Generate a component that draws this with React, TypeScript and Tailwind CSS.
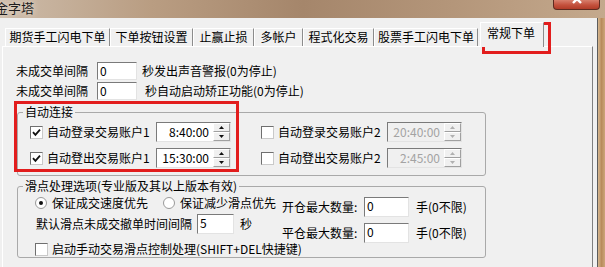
import React from "react";

const TABS = [
  { label: "期货手工闪电下单", w: "w-[105px]" },
  { label: "下单按钮设置", w: "w-[83px]" },
  { label: "止赢止损", w: "w-[61px]" },
  { label: "多帐户", w: "w-[49px]" },
  { label: "程式化交易", w: "w-[71px]" },
  { label: "股票手工闪电下单", w: "w-[104px]" },
];

function Check({ checked }: { checked?: boolean }) {
  return (
    <span className="w-[13px] h-[13px] shrink-0 flex items-center justify-center bg-white border border-t-[#6f6f6f] border-l-[#6f6f6f] border-b-[#c9c9c9] border-r-[#c9c9c9]">
      {checked && (
        <svg width="9" height="9" viewBox="0 0 9 9">
          <path d="M1 4.2 L3.4 6.8 L8 1.6" stroke="#111" strokeWidth="1.8" fill="none" />
        </svg>
      )}
    </span>
  );
}

function Radio({ checked }: { checked?: boolean }) {
  return (
    <span className="w-[12px] h-[12px] shrink-0 rounded-full bg-white border border-[#9a9a9a] flex items-center justify-center">
      {checked && <span className="w-[4px] h-[4px] rounded-full bg-[#111]" />}
    </span>
  );
}

function Field({ value, w }: { value: string; w: string }) {
  return (
    <div className={`${w} h-full bg-white pl-[2px] leading-[15px] border border-t-[#7a7a7a] border-l-[#7a7a7a] border-b-[#e3e3e3] border-r-[#e3e3e3]`}>
      {value}
    </div>
  );
}

function Spin({ disabled }: { disabled?: boolean }) {
  const c = disabled ? "#b0b0b0" : "#111";
  const btn =
    "flex-1 flex items-center justify-center bg-[#f0f0f0] border border-t-white border-l-white border-b-[#a0a0a0] border-r-[#a0a0a0]";
  return (
    <div className="w-[17px] flex flex-col">
      <div className={btn}>
        <svg width="5" height="3" viewBox="0 0 5 3">
          <path d="M2.5 0 L5 3 L0 3 Z" fill={c} />
        </svg>
      </div>
      <div className={btn}>
        <svg width="5" height="3" viewBox="0 0 5 3">
          <path d="M0 0 L5 0 L2.5 3 Z" fill={c} />
        </svg>
      </div>
    </div>
  );
}

function TimeBox({ value, disabled }: { value: string; disabled?: boolean }) {
  return (
    <div
      className={`w-[75px] h-[20px] flex border border-t-[#7a7a7a] border-l-[#7a7a7a] border-b-[#e3e3e3] border-r-[#e3e3e3] ${
        disabled ? "bg-[#f0f0f0]" : "bg-white"
      }`}
    >
      <span className={`flex-1 text-right pr-[4px] leading-[18px] ${disabled ? "text-[#a3a3a3]" : ""}`}>
        {value}
      </span>
      <Spin disabled={disabled} />
    </div>
  );
}

function TitleBar() {
  return (
    <div className="h-[18px] flex justify-between bg-[linear-gradient(90deg,#cdbcaa_0%,#b99d82_25%,#a5866b_50%,#b4967a_75%,#c4a98d_100%)]">
      <span className="-ml-[5px] mt-[1px] text-[13px] leading-[14px] text-[#1c1c1c] [text-shadow:0_0_6px_#f3ece4]">
        金字塔
      </span>
      <div className="mr-[5px] w-[47px] h-[10px] rounded-b-[4px] border border-t-0 border-[#5e2a20] overflow-hidden flex justify-center bg-[linear-gradient(180deg,#d77f6c_0%,#c4513d_55%,#b13c28_100%)]">
        <svg width="14" height="9" viewBox="0 0 14 9">
          <path d="M3 -5 L11 3 M11 -5 L3 3" stroke="#fff" strokeWidth="2.4" />
        </svg>
      </div>
    </div>
  );
}

function Tabs() {
  return (
    <div className="h-[28px] flex items-end pl-[5px]">
      {TABS.map((t) => (
        <div
          key={t.label}
          className={`${t.w} h-[18px] text-center leading-[16px] border-t border-l border-white border-r border-r-[#8c8c8c]`}
        >
          {t.label}
        </div>
      ))}
      <div className="relative z-10 ml-[2px] -mb-[1px] w-[64px] h-[25px] bg-[#f0f0f0] pt-[3px] pl-[6px] border-t border-l border-white border-r border-r-[#8c8c8c]">
        常规下单
      </div>
    </div>
  );
}

function Panel() {
  return (
    <div className="ml-[2px] w-[591px] h-[221px] border-t border-l border-white border-r border-r-[#7f7f7f]">
      <div className="mt-[15px] h-[18px] flex items-center pl-[13px]">
        <span className="w-[81px]">未成交单间隔</span>
        <Field w="w-[40px]" value="0" />
        <span className="ml-[5px]">秒发出声音警报(0为停止)</span>
      </div>
      <div className="mt-[2px] h-[18px] flex items-center pl-[13px]">
        <span className="w-[81px]">未成交单间隔</span>
        <Field w="w-[40px]" value="0" />
        <span className="ml-[8px]">秒自动启动矫正功能(0为停止)</span>
      </div>

      <fieldset className="mt-[5px] ml-[14px] w-[469px] pb-[7px] border border-[#a9a9a9] rounded-[3px]">
        <legend className="ml-[5px] px-[2px] leading-[14px]">自动连接</legend>
        <div className="mt-[3px] h-[20px] flex items-center pl-[12px]">
          <Check checked />
          <span className="ml-[4px] w-[109px]">自动登录交易账户1</span>
          <TimeBox value="8:40:00" />
          <span className="ml-[30px]">
            <Check />
          </span>
          <span className="ml-[4px] w-[109px]">自动登录交易账户2</span>
          <TimeBox value="20:40:00" disabled />
        </div>
        <div className="mt-[6px] h-[20px] flex items-center pl-[12px]">
          <Check checked />
          <span className="ml-[4px] w-[109px]">自动登出交易账户1</span>
          <TimeBox value="15:30:00" />
          <span className="ml-[30px]">
            <Check />
          </span>
          <span className="ml-[4px] w-[109px]">自动登出交易账户2</span>
          <TimeBox value="2:45:00" disabled />
        </div>
      </fieldset>

      <fieldset className="mt-[3px] ml-[14px] w-[469px] pb-[1px] border border-[#a9a9a9] rounded-[3px]">
        <legend className="ml-[5px] px-[2px] leading-[14px]">滑点处理选项(专业版及其以上版本有效)</legend>
        <div className="flex">
          <div className="w-[264px]">
            <div className="mt-[2px] h-[16px] flex items-center pl-[17px]">
              <Radio checked />
              <span className="ml-[5px]">保证成交速度优先</span>
              <span className="ml-[15px]">
                <Radio />
              </span>
              <span className="ml-[5px]">保证减少滑点优先</span>
            </div>
            <div className="mt-[3px] h-[20px] flex items-center pl-[18px]">
              <span className="w-[161px]">默认滑点未成交撤单时间间隔</span>
              <Field w="w-[37px]" value="5" />
              <span className="ml-[6px]">秒</span>
            </div>
          </div>
          <div>
            <div className="mt-[4px] h-[20px] flex items-center">
              <span className="w-[82px]">开仓最大数量:</span>
              <Field w="w-[45px]" value="0" />
              <span className="ml-[7px]">手(0不限)</span>
            </div>
            <div className="mt-[6px] h-[20px] flex items-center">
              <span className="w-[82px]">平仓最大数量:</span>
              <Field w="w-[45px]" value="0" />
              <span className="ml-[7px]">手(0不限)</span>
            </div>
          </div>
        </div>
        <div className="-mt-[1px] h-[14px] flex items-center pl-[17px]">
          <Check />
          <span className="ml-[4px]">启动手动交易滑点控制处理(SHIFT+DEL快捷键)</span>
        </div>
      </fieldset>
    </div>
  );
}

export default function App() {
  return (
    <div className="w-[605px] h-[267px] overflow-hidden bg-[#b8946f] font-['Noto_Sans_CJK_SC',sans-serif] text-[12px] leading-[14px] text-black">
      <TitleBar />
      <div className="flex h-[249px]">
        <div className="relative w-[598px] bg-[#f0f0f0] border-r border-[#5c5c5c]">
          <Tabs />
          <Panel />
          <div className="absolute left-[482px] top-[4px] w-[69px] h-[32px] border-[3px] border-[#e21d1d]" />
          <div className="absolute left-[14px] top-[83px] w-[225px] h-[71px] border-[3px] border-[#e21d1d]" />
        </div>
        <div className="flex-1 bg-[linear-gradient(90deg,#d6b891_0%,#b98b5c_50%,#cda57a_100%)]" />
      </div>
    </div>
  );
}
